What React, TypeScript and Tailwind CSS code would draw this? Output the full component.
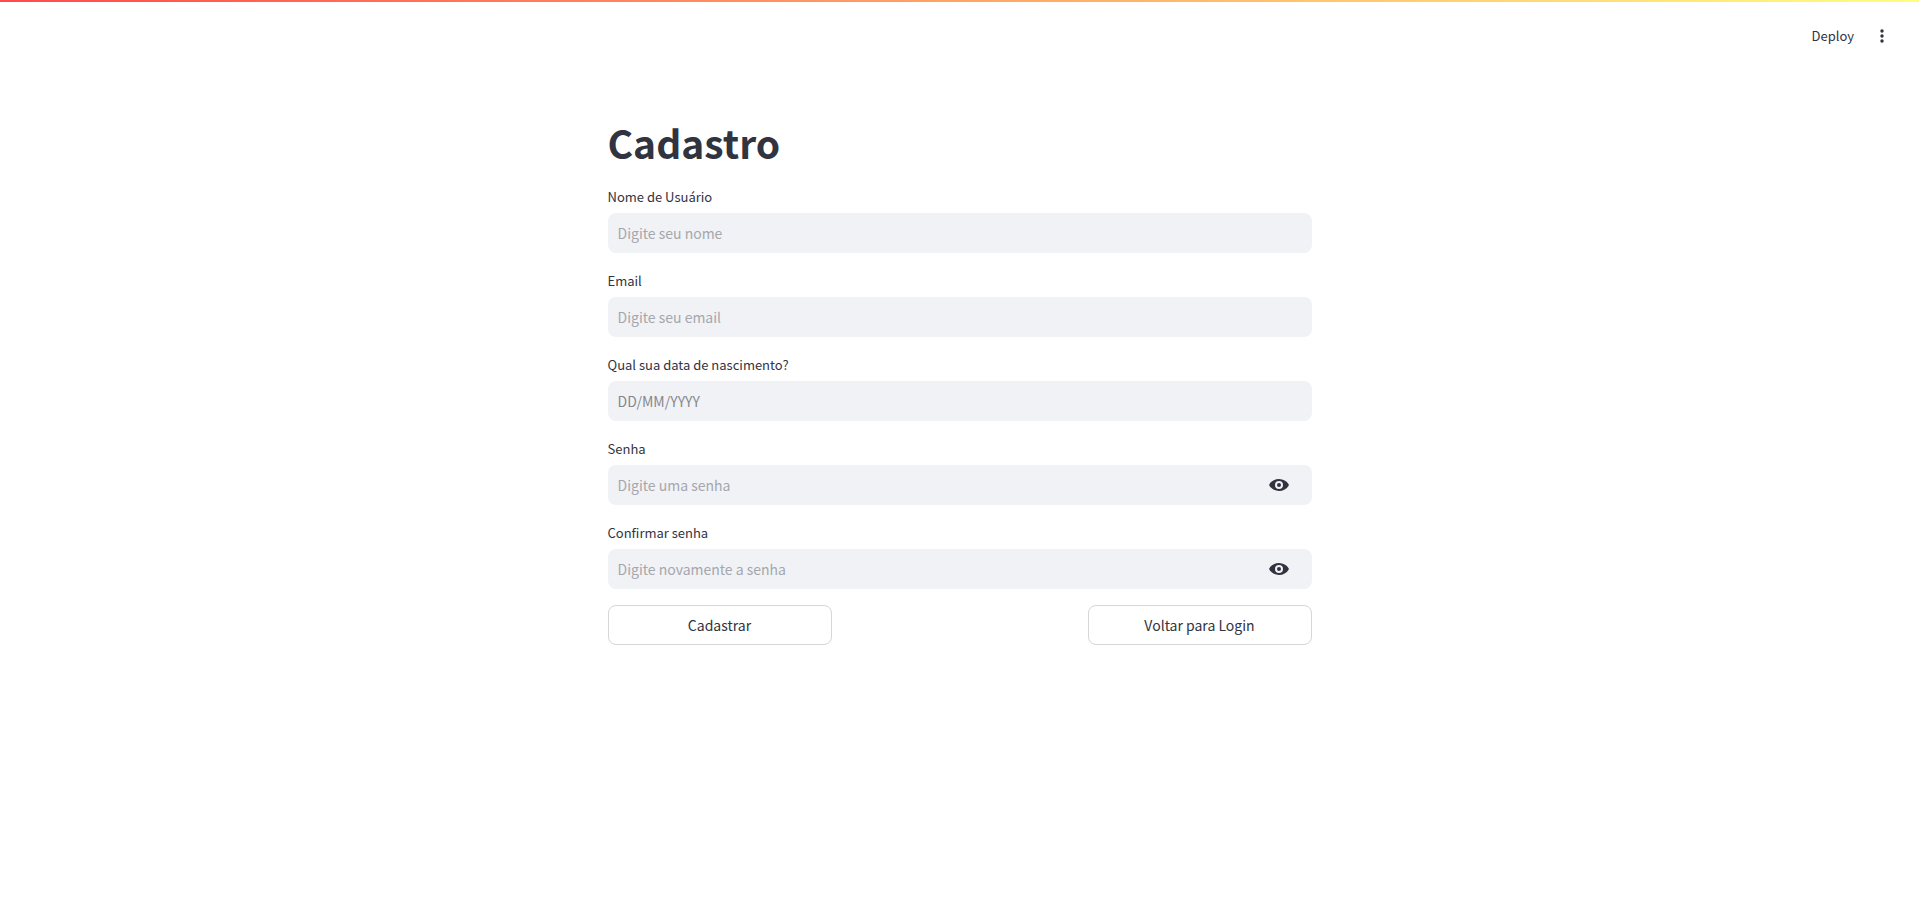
import { useState } from "react";

type FieldProps = {
  id: string;
  label: string;
  placeholder: string;
  password?: boolean;
  placeholderClass?: string;
};

function EyeIcon() {
  return (
    <svg viewBox="0 0 20 12" className="h-3 w-5" aria-hidden="true">
      <path
        fill="currentColor"
        fillRule="evenodd"
        d="M.4 5.3C2.3 2.1 5.8 0 10 0s7.700 2.100 9.600 5.300c.25.45.25.95 0 1.400C17.700 9.900 14.200 12 10 12S2.300 9.900.4 6.700c-.25-.45-.25-.95 0-1.400ZM10 10a4 4 0 1 0 0-8 4 4 0 0 0 0 8Zm0-2a2 2 0 1 0 0-4 2 2 0 0 0 0 4Z"
      />
    </svg>
  );
}

function Field({ id, label, placeholder, password = false, placeholderClass = "placeholder:text-[#a6a7ad]" }: FieldProps) {
  const [visible, setVisible] = useState(false);
  return (
    <div className="flex flex-col gap-1">
      <label htmlFor={id} className="text-[13px] leading-6">
        {label}
      </label>
      <div className="flex h-10 items-center rounded-lg bg-[#f0f2f6]">
        <input
          id={id}
          type={password && !visible ? "password" : "text"}
          placeholder={placeholder}
          className={`h-10 min-w-0 flex-1 bg-transparent px-[10px] text-sm outline-none ${placeholderClass}`}
        />
        {password && (
          <button
            type="button"
            aria-label="Mostrar senha"
            onClick={() => setVisible(!visible)}
            className="mr-[15px] flex h-10 w-9 items-center justify-center"
          >
            <EyeIcon />
          </button>
        )}
      </div>
    </div>
  );
}

export default function App() {
  return (
    <div className="min-h-screen bg-white font-['Noto_Sans_CJK_SC',sans-serif] text-[#31333f]">
      <div className="h-[2px] bg-linear-to-r/srgb from-[#ff4b4b] to-[#fffd80]" />
      <header className="flex h-[68px] items-center justify-end gap-[18px] pr-[27px]">
        <button type="button" className="text-[13px] leading-6">
          Deploy
        </button>
        <button type="button" aria-label="Menu" className="flex h-6 w-5 items-center justify-center">
          <svg viewBox="0 0 4 14" className="h-[14px] w-1" fill="currentColor" aria-hidden="true">
            <circle cx="2" cy="2" r="1.700" />
            <circle cx="2" cy="7" r="1.700" />
            <circle cx="2" cy="12" r="1.700" />
          </svg>
        </button>
      </header>
      <main className="mx-auto w-full max-w-[704px] pt-[46px]">
        <h1 className="pb-4 text-[39px] leading-[53px] font-bold">Cadastro</h1>
        <form className="flex flex-col gap-4" onSubmit={(e) => e.preventDefault()}>
          <Field id="nome" label="Nome de Usuário" placeholder="Digite seu nome" />
          <Field id="email" label="Email" placeholder="Digite seu email" />
          <Field
            id="nascimento"
            label="Qual sua data de nascimento?"
            placeholder="DD/MM/YYYY"
            placeholderClass="placeholder:text-[#86878e]"
          />
          <Field id="senha" label="Senha" placeholder="Digite uma senha" password />
          <Field id="confirmar" label="Confirmar senha" placeholder="Digite novamente a senha" password />
          <div className="grid grid-cols-3 gap-4">
            <button type="submit" className="h-10 rounded-lg border border-[#d6d6d9] text-sm">
              Cadastrar
            </button>
            <button type="button" className="col-start-3 h-10 rounded-lg border border-[#d6d6d9] text-sm">
              Voltar para Login
            </button>
          </div>
        </form>
      </main>
    </div>
  );
}
